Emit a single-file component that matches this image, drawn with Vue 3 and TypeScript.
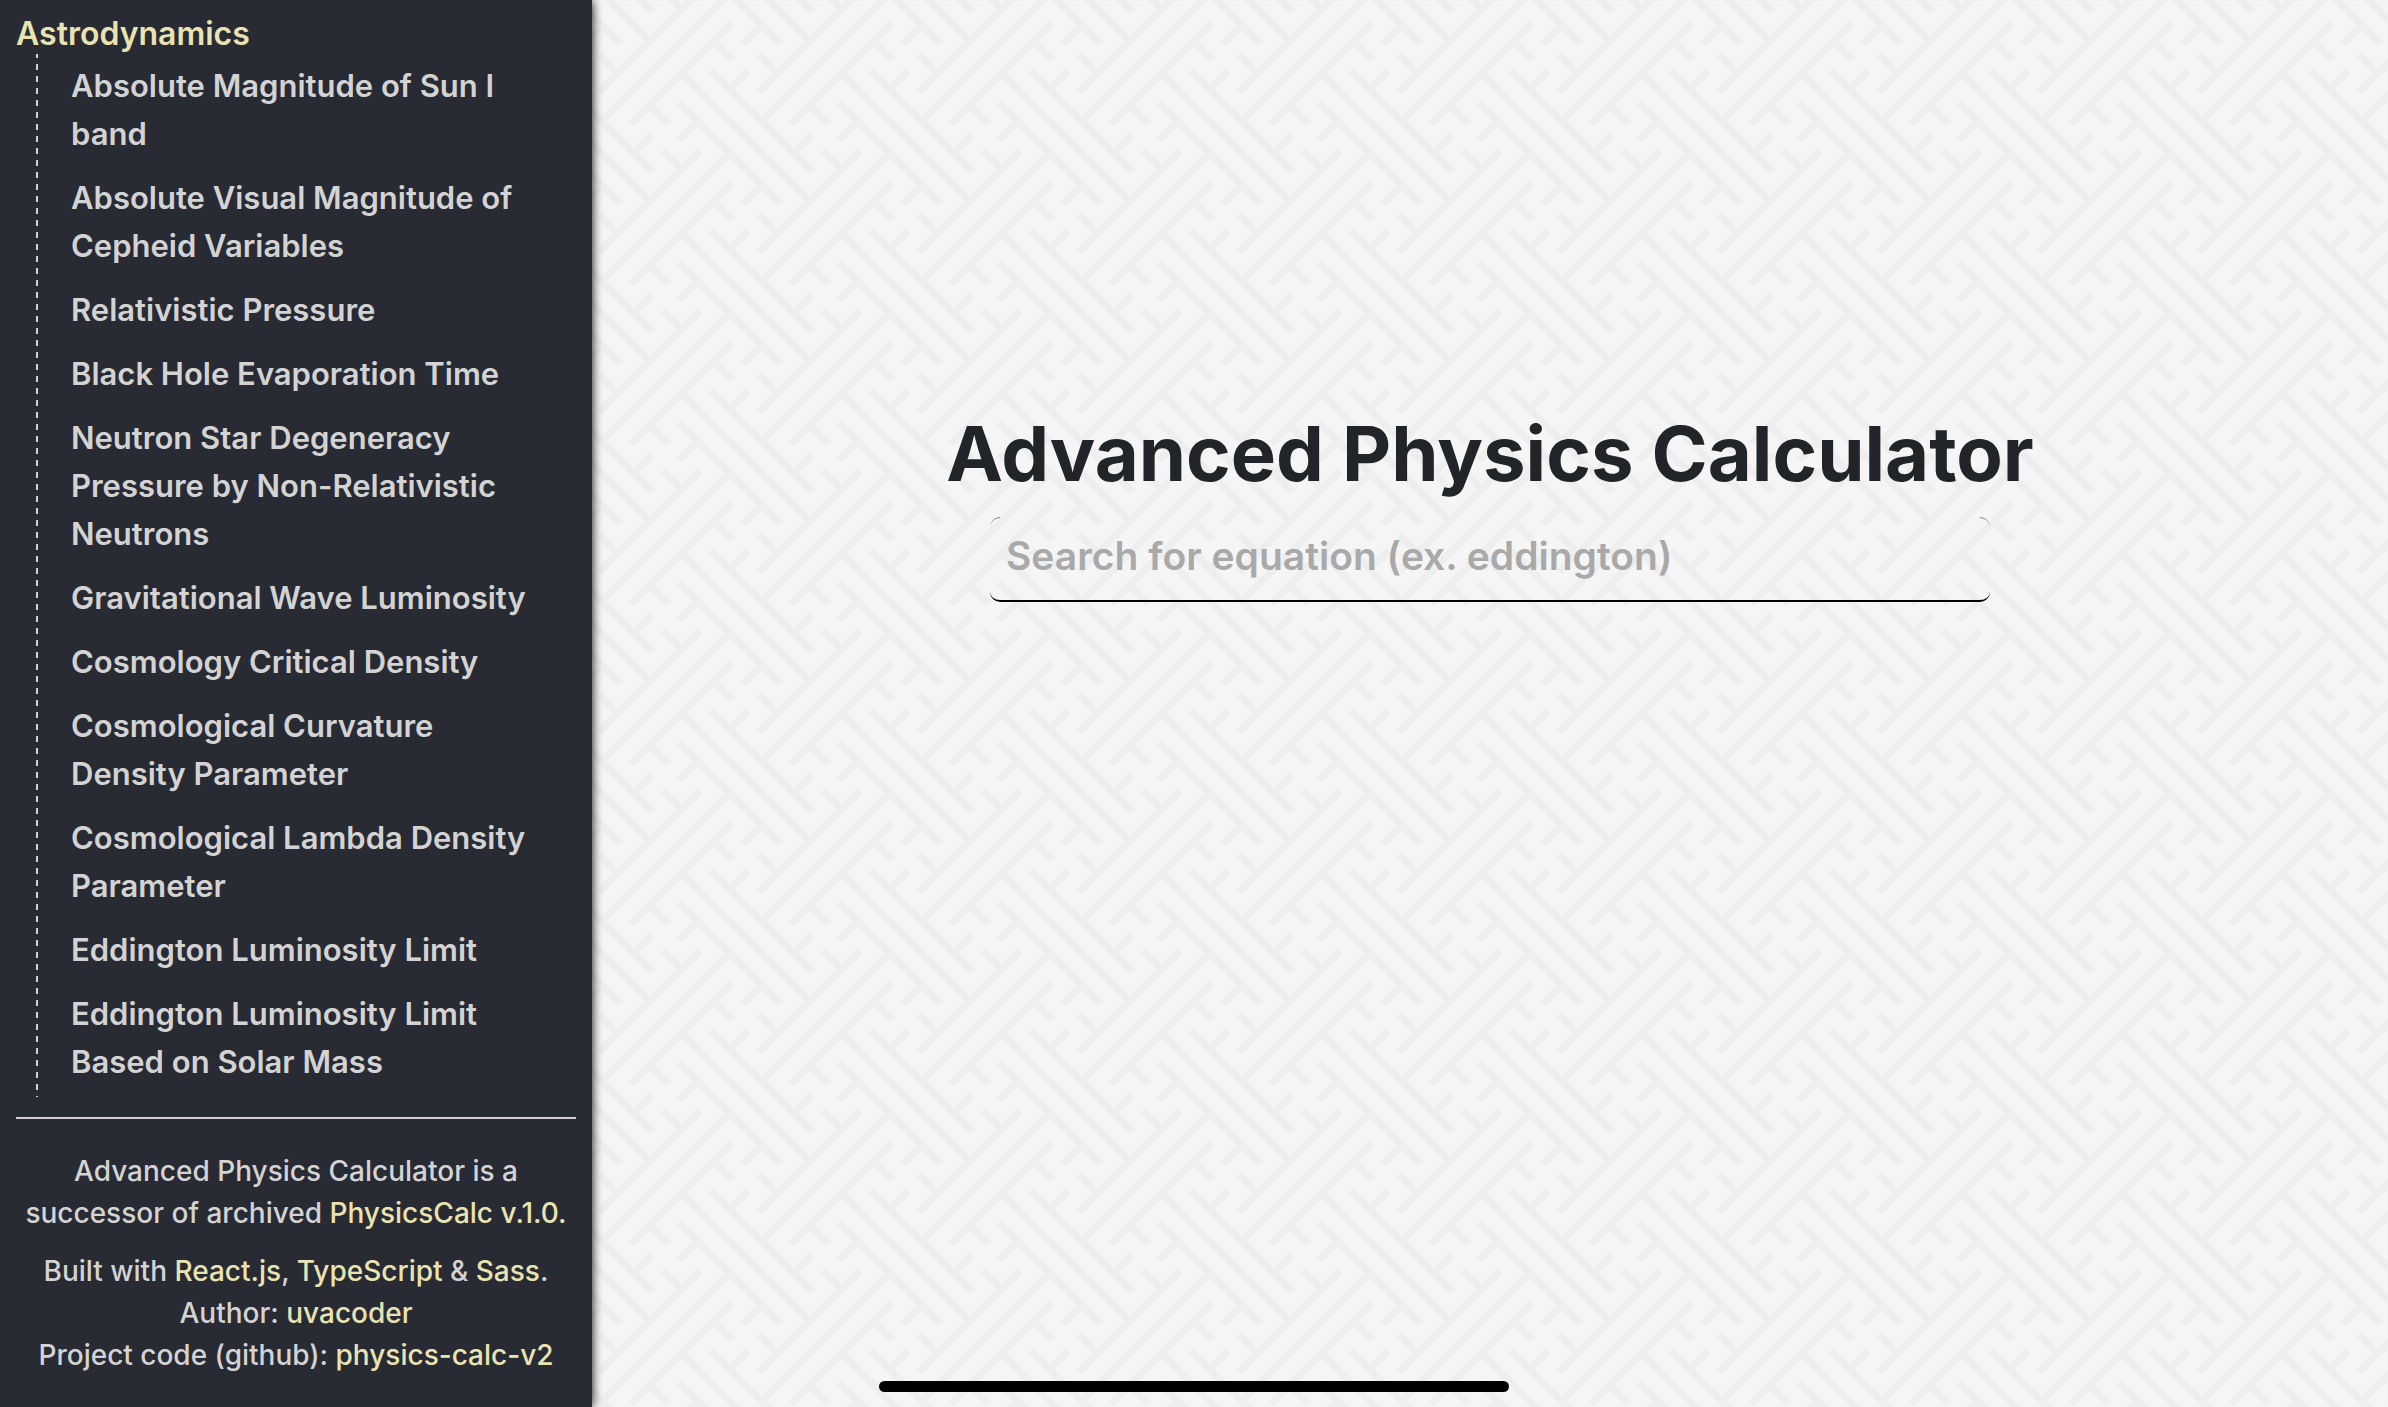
<script setup lang="ts">
import { ref } from 'vue'

const query = ref('')

const category = 'Astrodynamics'
const equations: string[] = [
  'Absolute Magnitude of Sun I band',
  'Absolute Visual Magnitude of Cepheid Variables',
  'Relativistic Pressure',
  'Black Hole Evaporation Time',
  'Neutron Star Degeneracy Pressure by Non-Relativistic Neutrons',
  'Gravitational Wave Luminosity',
  'Cosmology Critical Density',
  'Cosmological Curvature Density Parameter',
  'Cosmological Lambda Density Parameter',
  'Eddington Luminosity Limit',
  'Eddington Luminosity Limit Based on Solar Mass',
]

// The lattice repeats every 160px; neighbouring copies fill the tile edges.
const tile = 160
const steps = [-1, 0, 1]
const copies = steps.flatMap((row) => steps.map((col) => ({ x: col * tile, y: row * tile })))
</script>

<template>
  <div class="page">
    <svg class="lattice" aria-hidden="true">
      <defs>
        <path
          id="weave"
          transform="translate(42 73) scale(16)"
          d="M0 0L8 8M2 0L8 6M0 2L6 8M3 -3L-3 3M3 5L-5 13M1 5L-5 11
             M2 -2L3 -1M5 -1L6 0M-2 2L-1 3M-1 5L0 6
             M4 0L3 1M1 3L0 4M5 -3L4 -2M-2 4L-3 5"
        />
        <pattern id="tile" :width="tile" :height="tile" patternUnits="userSpaceOnUse">
          <use v-for="(c, i) in copies" :key="i" href="#weave" :x="c.x" :y="c.y" />
        </pattern>
      </defs>
      <rect width="100%" height="100%" fill="url(#tile)" />
    </svg>

    <aside class="sidebar">
      <nav>
        <h2 class="category">{{ category }}</h2>
        <ul class="equations">
          <li v-for="name in equations" :key="name">
            <a href="#">{{ name }}</a>
          </li>
        </ul>
      </nav>
      <footer class="about">
        <p>
          Advanced Physics Calculator is a<br />
          successor of archived
          <a href="#">PhysicsCalc v.1.0.</a>
        </p>
        <p>
          Built with <a href="#">React.js</a>, <a href="#">TypeScript</a> &amp;
          <a href="#">Sass</a>.<br />
          Author: <a href="#">uvacoder</a><br />
          Project code (github): <a href="#">physics-calc-v2</a>
        </p>
      </footer>
    </aside>

    <main class="content">
      <h1>Advanced Physics Calculator</h1>
      <div class="search">
        <input
          v-model="query"
          type="text"
          aria-label="Search for equation"
          placeholder="Search for equation (ex. eddington)"
        />
      </div>
    </main>

    <div class="home-bar"></div>
  </div>
</template>

<style>
body {
  margin: 0;
  background: #f5f5f5;
}
</style>

<style scoped>
.page {
  position: relative;
  display: flex;
  min-height: 100vh;
  font-family: Inter, "Liberation Sans", sans-serif;
  font-weight: 500;
  color: #212529;
}

.lattice {
  position: absolute;
  inset: 0;
  width: 100%;
  height: 100%;
  fill: none;
  stroke: #eeeeef;
  stroke-width: 0.46;
  stroke-linecap: square;
}

.sidebar {
  position: relative;
  flex: 0 0 592px;
  box-sizing: border-box;
  padding: 14px 16px 0;
  background: #282b34;
  color: #d3d3d3;
  box-shadow: 0 0 10px #000;
}

.category {
  margin: 0;
  font-size: 32px;
  line-height: 40px;
  font-weight: 600;
  color: #e8e3b0;
}

.equations {
  margin: 0 0 20px 20px;
  padding: 0 40px 3px 35px;
  list-style: none;
  font-size: 31px;
  line-height: 48px;
  font-weight: 600;
  background: repeating-linear-gradient(#d3d3d3 0 4px, transparent 4px 10px, #d3d3d3 10px 12px) 0 0 / 2px 100% no-repeat;
}

.equations li {
  padding: 8px 0;
}

.equations a {
  color: inherit;
  text-decoration: none;
}

.about {
  padding-top: 31px;
  border-top: 2px solid #d3ced3;
  font-size: 28px;
  line-height: 42px;
  text-align: center;
}

.about p {
  margin: 0 0 16px;
}

.about a {
  color: #e8e3b0;
  text-decoration: none;
}

.content {
  position: relative;
  flex: 1;
  display: flex;
  flex-direction: column;
  align-items: center;
  padding-top: 405px;
}

h1 {
  margin: 0 0 16px;
  font-size: 76px;
  line-height: 96px;
  font-weight: 700;
}

.search {
  position: relative;
  width: min(1000px, 90%);
}

.search::before,
.search::after {
  content: "";
  position: absolute;
  top: 0;
  width: 10px;
  height: 10px;
  border-top: 1px solid #808080;
}

.search::before {
  left: 0;
  border-top-left-radius: 10px;
}

.search::after {
  right: 0;
  border-top-right-radius: 10px;
}

input {
  display: block;
  box-sizing: border-box;
  width: 100%;
  height: 85px;
  padding: 0 16px 6px;
  border: 0;
  border-bottom: 2px solid #000;
  border-radius: 10px;
  outline: none;
  background: transparent;
  color: inherit;
  font-family: inherit;
  font-size: 39px;
  font-weight: 600;
}

input::placeholder {
  color: #a9a9a9;
  opacity: 1;
}

.home-bar {
  position: fixed;
  bottom: 15px;
  left: 50%;
  width: 630px;
  height: 11px;
  border-radius: 6px;
  background: #000;
  transform: translateX(-50%);
}
</style>
